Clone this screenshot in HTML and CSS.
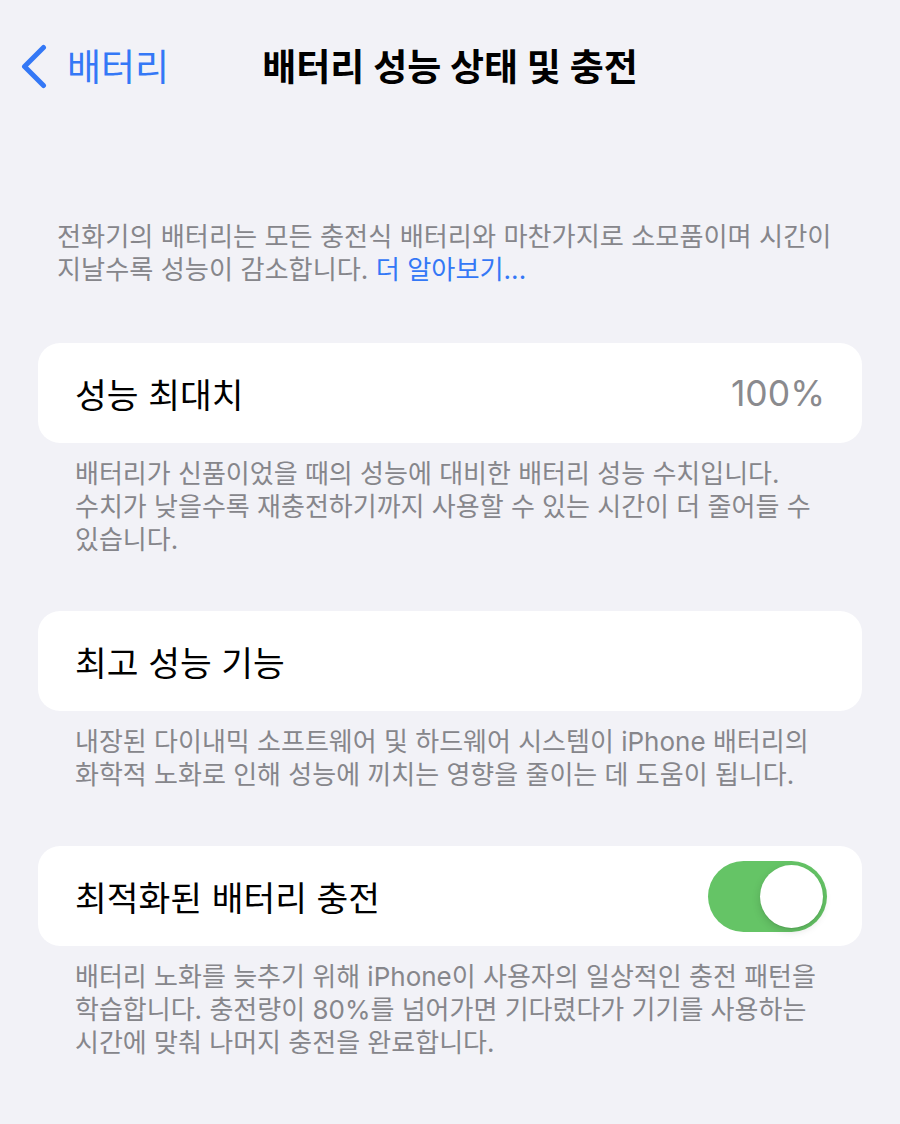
FILE: index.html
```html
<!DOCTYPE html>
<html lang="ko">
<head>
<meta charset="utf-8">
<title>배터리 성능 상태 및 충전</title>
<link rel="stylesheet" href="styles.css">
</head>
<body>
<div class="nav">
  <div class="nav-left">
    <svg class="chevron" width="28" height="46" viewBox="0 0 28 46"><polyline points="23.5,3.5 4.5,22.5 23.5,41.5" fill="none" stroke="#3478f6" stroke-width="5" stroke-linecap="round" stroke-linejoin="round"/></svg>
    <span class="back-label">배터리</span>
  </div>
  <div class="nav-title">배터리 성능 상태 및 충전</div>
  <div class="nav-right"></div>
</div>

<p class="intro">전화기의 배터리는 모든 충전식 배터리와 마찬가지로 소모품이며 시간이<br>지날수록 성능이 감소합니다. <span class="link">더 알아보기...</span></p>

<div class="group">
  <div class="card">
    <span class="label">성능 최대치</span>
    <span class="value">100%</span>
  </div>
  <p class="footer">배터리가 신품이었을 때의 성능에 대비한 배터리 성능 수치입니다.<br>수치가 낮을수록 재충전하기까지 사용할 수 있는 시간이 더 줄어들 수<br>있습니다.</p>
</div>

<div class="group">
  <div class="card">
    <span class="label">최고 성능 기능</span>
  </div>
  <p class="footer">내장된 다이내믹 소프트웨어 및 하드웨어 시스템이 iPhone 배터리의<br>화학적 노화로 인해 성능에 끼치는 영향을 줄이는 데 도움이 됩니다.</p>
</div>

<div class="group">
  <div class="card">
    <span class="label">최적화된 배터리 충전</span>
    <span class="toggle"><span class="knob"></span></span>
  </div>
  <p class="footer">배터리 노화를 늦추기 위해 iPhone이 사용자의 일상적인 충전 패턴을<br>학습합니다. 충전량이 80%를 넘어가면 기다렸다가 기기를 사용하는<br>시간에 맞춰 나머지 충전을 완료합니다.</p>
</div>
</body>
</html>
```

FILE: styles.css
```css
html, body {
  margin: 0;
  padding: 0;
}
body {
  background: #f2f2f7;
  font-family: "Inter", "Noto Sans CJK KR", sans-serif;
  color: #000;
  width: 900px;
  min-height: 1124px;
}
.nav {
  display: grid;
  grid-template-columns: 1fr auto 1fr;
  align-items: center;
  height: 56px;
  margin-top: 39px;
  padding-left: 20px;
}
.nav-left {
  display: flex;
  align-items: center;
  gap: 19px;
}
.chevron {
  display: block;
}
.back-label {
  font-size: 37px;
  color: #3478f6;
  line-height: 1;
}
.nav-title {
  font-size: 37px;
  font-weight: 700;
  line-height: 1;
  margin-left: -20px;
}
.intro {
  margin: 125px 0 57px;
  padding: 0 20px 0 57px;
  font-size: 26.2px;
  line-height: 33px;
  color: #86868b;
  white-space: nowrap;
}
.link {
  color: #3478f6;
}
.group {
  margin: 0 38px;
}
.card {
  background: #fff;
  border-radius: 22px;
  height: 100px;
  padding: 0 37px;
  display: flex;
  align-items: center;
  justify-content: space-between;
}
.label {
  font-size: 34.5px;
}
.value {
  font-size: 35.5px;
  color: #8a8a8e;
}
.footer {
  margin: 0 0 55px;
  padding: 14px 37px 0;
  font-size: 26px;
  line-height: 33px;
  color: #86868b;
  white-space: nowrap;
}
.toggle {
  position: relative;
  width: 119px;
  height: 71px;
  border-radius: 36px;
  background: #65c466;
  margin-right: -2px;
}
.knob {
  position: absolute;
  top: 4px;
  left: 52px;
  width: 63px;
  height: 63px;
  border-radius: 50%;
  background: #fff;
  box-shadow: 0 3px 8px rgba(0,0,0,0.15), 0 1px 1px rgba(0,0,0,0.08);
}
```
